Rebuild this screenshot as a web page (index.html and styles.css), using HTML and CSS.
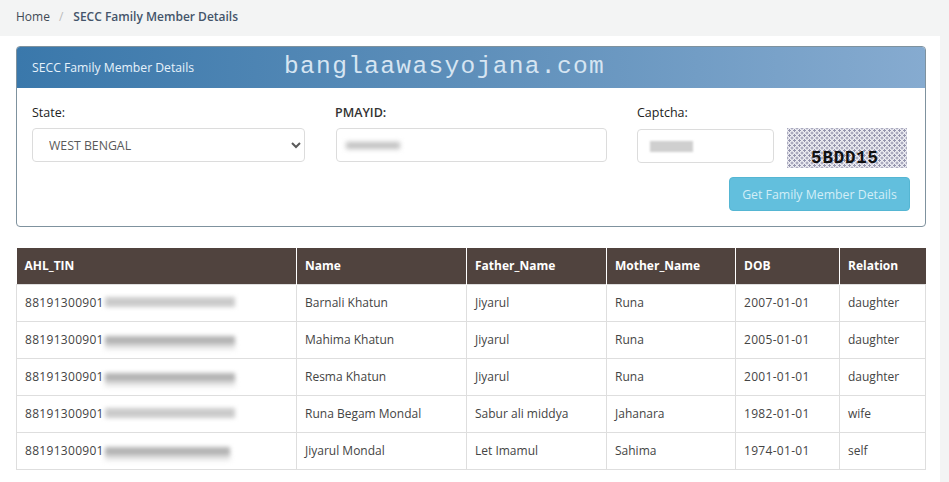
FILE: index.html
```html
<!DOCTYPE html>
<html lang="en">
<head>
<meta charset="utf-8">
<title>SECC Family Member Details</title>
<link rel="stylesheet" href="styles.css">
</head>
<body>
<nav class="crumbs">
  <a class="crumb-home">Home</a>
  <span class="crumb-sep">/</span>
  <span class="crumb-current">SECC Family Member Details</span>
</nav>
<main class="content">
  <section class="panel">
    <header class="panel-head">
      <span class="panel-title">SECC Family Member Details</span>
      <span class="watermark">banglaawasyojana.com</span>
    </header>
    <form class="panel-body">
      <div class="field field-state">
        <label class="label" for="state">State:</label>
        <select class="control" id="state"><option>WEST BENGAL</option></select>
      </div>
      <div class="field field-id">
        <label class="label label-strong" for="pmay">PMAYID:</label>
        <div class="control control-box" id="pmay"><span class="smudge smudge-id"></span></div>
      </div>
      <div class="field field-captcha">
        <label class="label" for="cap">Captcha:</label>
        <div class="control control-box control-captcha" id="cap"><span class="smudge smudge-cap"></span></div>
      </div>
      <div class="captcha-img"><span class="captcha-text">5BDD15</span></div>
      <div class="actions"><button class="btn" type="button">Get Family Member Details</button></div>
    </form>
  </section>
  <table class="grid">
    <colgroup>
      <col class="c1"><col class="c2"><col class="c3"><col class="c4"><col class="c5"><col class="c6">
    </colgroup>
    <thead>
      <tr><th>AHL_TIN</th><th>Name</th><th>Father_Name</th><th>Mother_Name</th><th>DOB</th><th>Relation</th></tr>
    </thead>
    <tbody>
      <tr><td><span class="num">88191300901</span><span class="blur blur-light"></span></td><td>Barnali Khatun</td><td>Jiyarul</td><td>Runa</td><td><span class="num">2007-01-01</span></td><td>daughter</td></tr>
      <tr><td><span class="num">88191300901</span><span class="blur"></span></td><td>Mahima Khatun</td><td>Jiyarul</td><td>Runa</td><td><span class="num">2005-01-01</span></td><td>daughter</td></tr>
      <tr><td><span class="num">88191300901</span><span class="blur"></span></td><td>Resma Khatun</td><td>Jiyarul</td><td>Runa</td><td><span class="num">2001-01-01</span></td><td>daughter</td></tr>
      <tr><td><span class="num">88191300901</span><span class="blur blur-light"></span></td><td>Runa Begam Mondal</td><td>Sabur ali middya</td><td>Jahanara</td><td><span class="num">1982-01-01</span></td><td>wife</td></tr>
      <tr><td><span class="num">88191300901</span><span class="blur blur-short"></span></td><td>Jiyarul Mondal</td><td>Let Imamul</td><td>Sahima</td><td><span class="num">1974-01-01</span></td><td>self</td></tr>
    </tbody>
  </table>
</main>
</body>
</html>
```
FILE: styles.css
```css
* { box-sizing: border-box; }
html, body { margin: 0; height: 100%; }
body {
  background: #f3f4f4;
  font-family: "Open Sans", "Noto Sans", sans-serif;
  font-size: 12px;
  color: #444;
  overflow: hidden;
}
.crumbs {
  height: 36px;
  padding: 8px 16px 0;
  display: flex;
  align-items: flex-start;
  line-height: 17px;
}
.crumb-home { color: #3f4a55; }
.crumb-sep { margin: 0 10px 0 9px; color: #bbb; }
.crumb-current { color: #44546a; font-weight: 600; }
.content {
  width: 940px;
  height: 446px;
  background: #fff;
  padding: 10px 14px 0 16px;
}
.panel {
  width: 910px;
  height: 181px;
  border: 1px solid #7f929e;
  border-radius: 4px;
  overflow: hidden;
}
.panel-head {
  height: 41px;
  display: flex;
  align-items: center;
  padding-left: 15px;
  background: linear-gradient(90deg, #3a78ab 0%, #5e8fba 50%, #86abd0 100%);
  color: #e6f2fb;
}
.panel-title { width: 252px; font-size: 12.2px; }
.watermark {
  font-family: "Liberation Mono", monospace;
  font-size: 24.5px;
  letter-spacing: 1.35px;
  color: #d6e5f2;
  margin-top: -3px;
}
.panel-body {
  display: grid;
  grid-template-columns: 304px 270px 180px 120px;
  grid-template-rows: 74px 49px;
  padding: 15px 0 0 15px;
}
.field { display: flex; flex-direction: column; }
.field-state { grid-column: 1; }
.field-id { grid-column: 2; width: 271px; }
.field-captcha { grid-column: 3; margin-left: 31px; width: 137px; }
.label {
  height: 25px;
  padding-top: 1px;
  line-height: 18px;
  color: #222;
  font-size: 12.5px;
  font-weight: 500;
}
.label-strong { font-weight: 600; color: #333; margin-left: -1px; }
.control {
  height: 34px;
  border: 1px solid #dcdcdc;
  border-radius: 4px;
  background: #fff;
  font: inherit;
  color: #5a5a5a;
}
select.control { width: 273px; padding-left: 12px; font-size: 12.3px; }
.control-box { display: flex; align-items: center; padding-left: 9px; }
.control-captcha { margin-top: 1px; padding-left: 12px; }
.smudge { display: block; height: 7px; background: #c0c0c0; filter: blur(2.5px); }
.smudge-id { width: 54px; }
.smudge-cap { width: 43px; height: 11px; background: #cfcfcf; filter: blur(1px); }
.captcha-img {
  grid-column: 4;
  width: 120px;
  height: 40px;
  margin-top: 25px;
  margin-left: 1px;
  background-color: #eeeef4;
  background-image: radial-gradient(#9494ad 1px, transparent 1.25px), radial-gradient(#9494ad 1px, transparent 1.25px);
  background-size: 5px 5px;
  background-position: 0 0, 2.5px 2.5px;
  display: flex;
  align-items: flex-end;
  justify-content: center;
}
.captcha-text {
  font-family: "Liberation Mono", monospace;
  font-weight: 700;
  font-size: 17.5px;
  letter-spacing: 0.8px;
  color: #111;
  line-height: 20px;
  margin-left: -4px;
}
.actions {
  grid-column: 1 / -1;
  grid-row: 2;
  display: flex;
  justify-content: flex-end;
  margin-right: -4px;
  align-self: start;
}
.btn {
  width: 181px;
  height: 34px;
  border: 1px solid #55b6d3;
  border-radius: 4px;
  background: #62bfdd;
  color: #d3eef7;
  font: inherit;
  font-size: 12.3px;
  padding: 0;
}
.grid {
  margin-top: 21px;
  width: 909px;
  table-layout: fixed;
  border-collapse: collapse;
}
.c1 { width: 280px; }
.c2 { width: 170px; }
.c3 { width: 140px; }
.c4 { width: 129px; }
.c5 { width: 104px; }
.c6 { width: 86px; }
.grid th, .grid td {
  height: 37px;
  padding: 0 8px;
  text-align: left;
  white-space: nowrap;
}
.grid th {
  height: 36px;
  background: #50433e;
  color: #fff;
  font-weight: 700;
  border-left: 1px solid #fff;
}
.grid th:first-child { border-left: 0; }
.grid td {
  border: 1px solid #dedede;
  color: #444;
}
.num { letter-spacing: 0.3px; }
.blur {
  display: inline-block;
  width: 130px;
  height: 8px;
  margin-left: 1px;
  background: #b4b4b4;
  box-shadow: 0 5px 3px rgba(190, 190, 190, 0.5);
  filter: blur(2px);
  vertical-align: 0;
}
.blur-light { background: #cbcbcb; height: 10px; box-shadow: none; }
.blur-short { width: 125px; }
```
